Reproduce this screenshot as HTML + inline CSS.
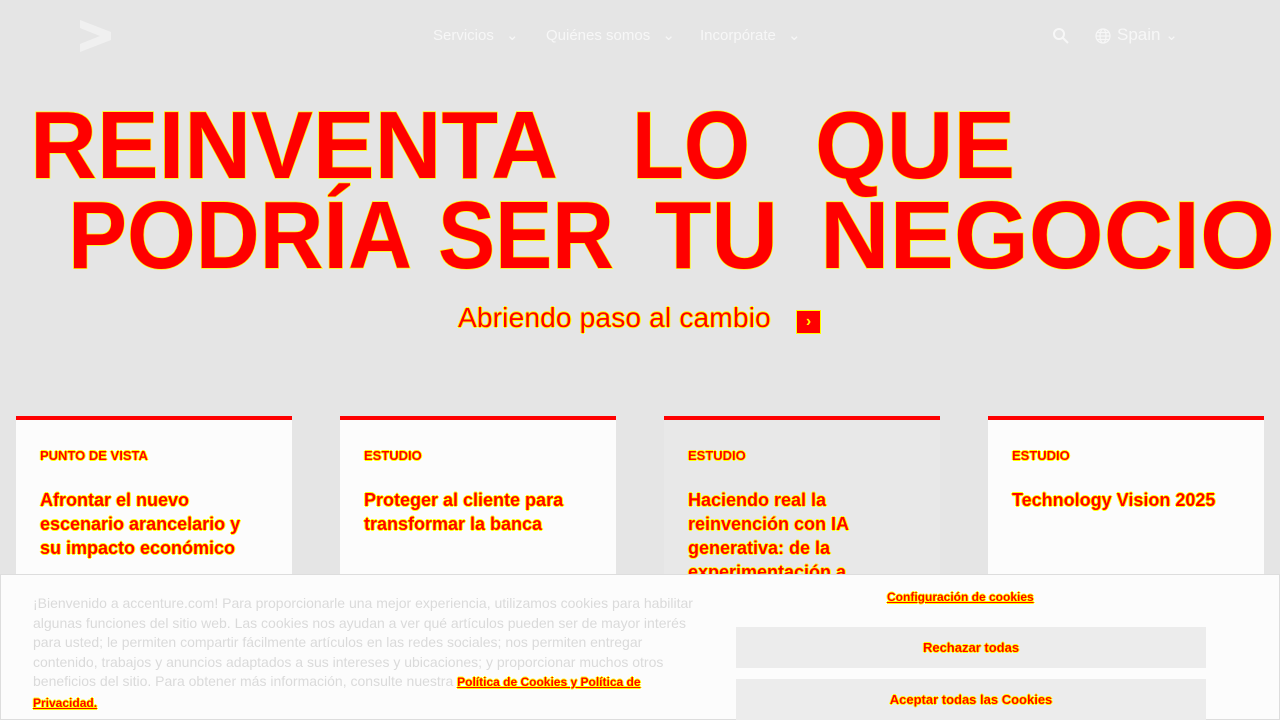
<!DOCTYPE html>
<html><head><meta charset="utf-8"><style>
*{margin:0;padding:0;box-sizing:border-box}
body{width:1280px;height:720px;overflow:hidden;background:#e5e5e5;font-family:"Liberation Sans",sans-serif;position:relative}
.nav{position:absolute;top:26px;font-size:15px;color:#f7f7f7}
.r{color:#f00;text-shadow:1px 0 #ff0,0 1px #ff0,-1px 0 #ff0,0 -1px #ff0}
.card{position:absolute;top:416px;width:276px;height:170px;background:#fcfcfc;border-top:4px solid #f00}
.lab{position:absolute;left:24px;top:28px;font-size:13px;font-weight:bold}
.tt{position:absolute;left:24px;top:68px;width:220px;font-size:18px;line-height:24px;font-weight:bold}
.ck{position:absolute;left:0;top:574px;width:1280px;height:146px;background:#fcfcfc;border:1px solid #ddd}
.btn{position:absolute;left:736px;width:470px;height:41px;background:#ececec;font-size:13px;font-weight:bold;text-align:center;line-height:41px}
</style></head><body>
<svg style="position:absolute;left:80px;top:20px" width="32" height="32" viewBox="0 0 32 32"><path d="M0 0 L31 12 L31 20 L0 32 L0 24 L20 16 L0 8Z" fill="#f0f0f0"/></svg>
<div class="nav" style="left:433px">Servicios <span style="margin-left:8px">⌄</span></div>
<div class="nav" style="left:546px">Quiénes somos <span style="margin-left:8px">⌄</span></div>
<div class="nav" style="left:700px">Incorpórate <span style="margin-left:8px">⌄</span></div>
<svg style="position:absolute;left:1052px;top:27px" width="18" height="18" viewBox="0 0 18 18" fill="none" stroke="#f7f7f7" stroke-width="2"><circle cx="7" cy="7" r="5"/><path d="M11 11l5 5"/></svg>
<svg style="position:absolute;left:1095px;top:28px" width="16" height="16" viewBox="0 0 16 16" fill="none" stroke="#f7f7f7" stroke-width="1.2"><circle cx="8" cy="8" r="7"/><ellipse cx="8" cy="8" rx="3" ry="7"/><path d="M1 8h14M2 4.5h12M2 11.5h12"/></svg>
<div class="nav" style="left:1117px;top:25px;font-size:17px">Spain <span style="font-size:15px">⌄</span></div>
<svg style="position:absolute;left:0;top:90px" width="1280" height="190">
<g font-family="Liberation Sans" font-weight="bold" font-size="97" fill="#f00" stroke="#ff0" stroke-width="1.5" paint-order="stroke">
<text x="30" y="88" textLength="528" lengthAdjust="spacingAndGlyphs" font-size="96">REINVENTA</text>
<text x="632" y="88" textLength="118" lengthAdjust="spacingAndGlyphs" font-size="96">LO</text>
<text x="815" y="88" textLength="200" lengthAdjust="spacingAndGlyphs" font-size="96">QUE</text>
<text x="68" y="178" textLength="344" lengthAdjust="spacingAndGlyphs" font-size="96">PODRÍA</text>
<text x="438" y="178" textLength="176" lengthAdjust="spacingAndGlyphs" font-size="96">SER</text>
<text x="655" y="178" textLength="123" lengthAdjust="spacingAndGlyphs" font-size="96">TU</text>
<text x="820" y="178" textLength="455" lengthAdjust="spacingAndGlyphs" font-size="96">NEGOCIO</text>
</g></svg>
<div class="r" style="position:absolute;left:458px;top:302px;font-size:28px;width:320px;letter-spacing:0.2px">Abriendo paso al cambio</div>
<div style="position:absolute;left:796px;top:310px;width:25px;height:24px;background:#f00;border:1px solid #ff0;color:#ff0;font-size:16px;text-align:center;line-height:22px;font-weight:bold">›</div>
<div class="card" style="left:16px"><div class="lab r">PUNTO DE VISTA</div><div class="tt r">Afrontar el nuevo escenario arancelario y su impacto económico</div></div>
<div class="card" style="left:340px"><div class="lab r">ESTUDIO</div><div class="tt r">Proteger al cliente para transformar la banca</div></div>
<div class="card" style="left:664px;background:#e8e8e8"><div class="lab r">ESTUDIO</div><div class="tt r" style="width:185px">Haciendo real la reinvención con IA generativa: de la experimentación a</div></div>
<div class="card" style="left:988px"><div class="lab r">ESTUDIO</div><div class="tt r" style="width:250px">Technology Vision 2025</div></div>
<div class="ck">
<div style="position:absolute;left:32px;top:19px;width:670px;font-size:14px;line-height:19.5px;color:#dadada">¡Bienvenido a accenture.com! Para proporcionarle una mejor experiencia, utilizamos cookies para habilitar algunas funciones del sitio web. Las cookies nos ayudan a ver qué artículos pueden ser de mayor interés para usted; le permiten compartir fácilmente artículos en las redes sociales; nos permiten entregar contenido, trabajos y anuncios adaptados a sus intereses y ubicaciones; y proporcionar muchos otros beneficios del sitio. Para obtener más información, consulte nuestra <b class="r" style="font-size:12px;text-decoration:underline">Política de Cookies y Política de Privacidad.</b></div>
<div class="r" style="position:absolute;left:886px;top:15px;font-size:12px;font-weight:bold;text-decoration:underline">Configuración de cookies</div>
</div>
<div class="btn" style="top:627px"><span class="r">Rechazar todas</span></div>
<div class="btn" style="top:679px"><span class="r">Aceptar todas las Cookies</span></div>
</body></html>
